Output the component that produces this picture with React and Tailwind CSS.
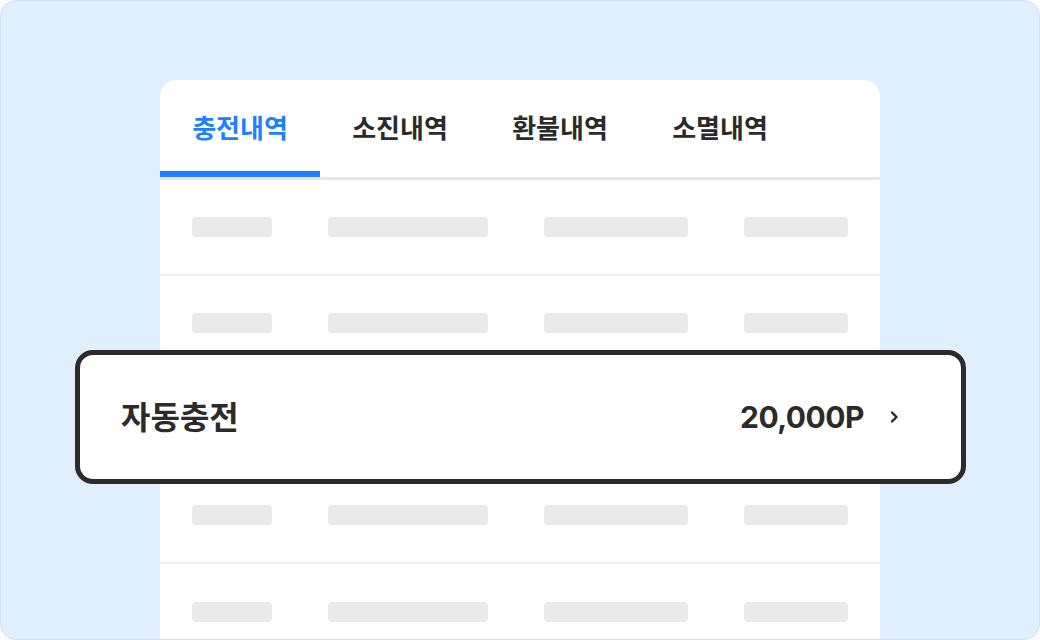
import React from "react";

const tabs = ["충전내역", "소진내역", "환불내역", "소멸내역"];

function Row({ last }) {
  return (
    <div className={`flex h-[96px] items-center gap-[56px] px-8 ${last ? "" : "border-b-2 border-[#eeeeee]"}`}>
      <div className="h-5 w-[80px] rounded-[4px] bg-[#e9e9e9]" />
      <div className="h-5 w-[160px] rounded-[4px] bg-[#e9e9e9]" />
      <div className="h-5 w-[144px] rounded-[4px] bg-[#e9e9e9]" />
      <div className="h-5 w-[104px] rounded-[4px] bg-[#e9e9e9]" />
    </div>
  );
}

export default function App() {
  return (
    <div
      className="relative h-[640px] w-[1040px] overflow-hidden rounded-2xl border border-[#cddff1] bg-[#e0effe]"
      style={{ fontFamily: '"Inter", "Noto Sans CJK KR", sans-serif' }}
    >
      <div className="ml-[159px] mt-[79px] w-[720px] rounded-t-2xl bg-white">
        <div className="flex border-b-[3px] border-[#e6e6e6]">
          {tabs.map((t, i) => (
            <div
              key={t}
              className={`flex h-[97px] w-[160px] items-center justify-center border-b-[6px] pt-[5px] text-[26px] font-bold ${
                i === 0 ? "border-[#1f80ff] text-[#1f80ff]" : "border-transparent text-[#2b2b2b]"
              }`}
            >
              {t}
            </div>
          ))}
        </div>
        <Row />
        <Row />
        <Row />
        <Row />
        <Row last />
      </div>

      <div className="absolute left-[74px] top-[349px] flex h-[134px] w-[891px] items-center rounded-[18px] border-[5px] border-[#2b2b2b] bg-white pl-[41px] pr-[62px]">
        <div className="flex-1 pt-[1px] text-[32px] font-bold text-[#2b2b2b]">자동충전</div>
        <div className="text-[30px] font-bold tracking-[-0.5px] text-[#2b2b2b]">20,000P</div>
        <svg className="ml-[25px]" width="10" height="14" viewBox="0 0 10 14" fill="none">
          <path d="M3 2.5 L7.5 7 L3 11.5" stroke="#2b2b2b" strokeWidth="2.4" strokeLinecap="round" strokeLinejoin="round" />
        </svg>
      </div>
    </div>
  );
}
